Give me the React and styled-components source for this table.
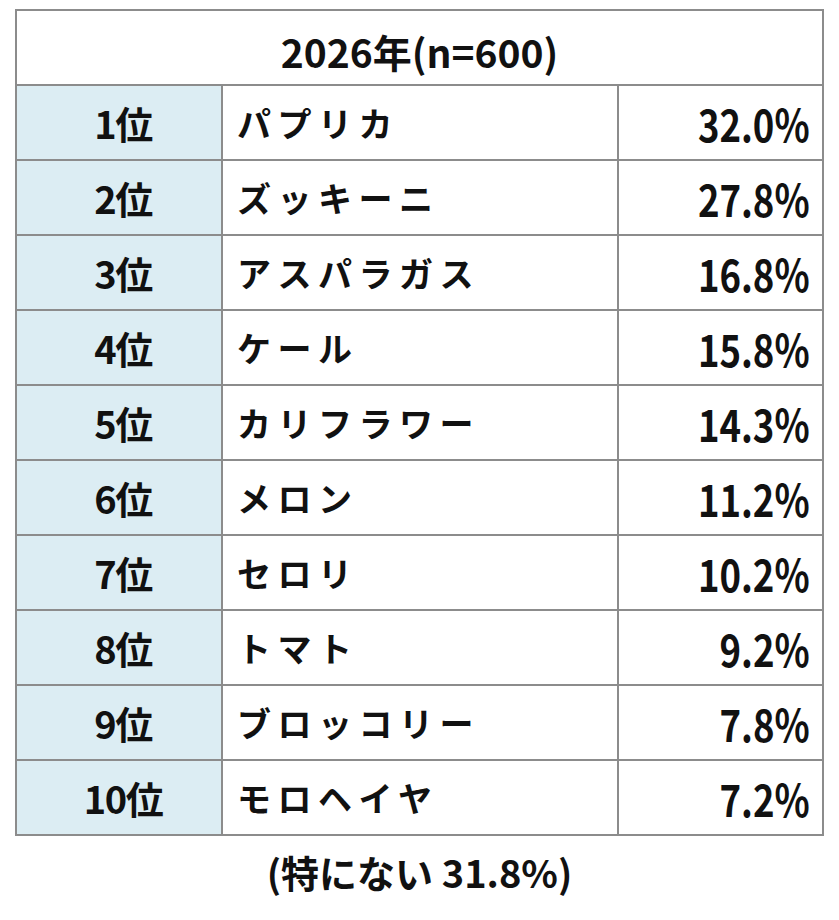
import React from "react";
import styled, { createGlobalStyle } from "styled-components";

const Global = createGlobalStyle`
  html, body { margin: 0; padding: 0; background: #ffffff; }
  body { font-family: "Noto Sans CJK JP", "Noto Sans", sans-serif; }
`;

const Page = styled.div`
  width: 839px;
  height: 920px;
  padding: 9px 15px 0 15px;
  box-sizing: border-box;
  background: #fff;
  display: flex;
  flex-direction: column;
  align-items: stretch;
`;

const Table = styled.div`
  display: grid;
  grid-template-columns: 206px 396px 1fr;
  grid-auto-rows: 75px;
  width: 809px;
  border-top: 2px solid #8c8c8c;
  border-left: 2px solid #8c8c8c;
  box-sizing: border-box;
`;

const Cell = styled.div`
  border-right: 2px solid #8c8c8c;
  border-bottom: 2px solid #8c8c8c;
  display: flex;
  align-items: center;
  font-weight: 700;
  color: #111;
  box-sizing: border-box;
  overflow: hidden;
  white-space: nowrap;
`;

const HeaderCell = styled(Cell)`
  grid-column: 1 / span 3;
  justify-content: center;
  padding-top: 6px;
  font-size: 39px;
  letter-spacing: 0px;
`;

const RankCell = styled(Cell)`
  background: #dcedf3;
  justify-content: center;
  font-size: 38px;
  letter-spacing: -1.5px;
  padding-left: 8px;
`;

const NameCell = styled(Cell)`
  padding-left: 14px;
  font-size: 34px;
  letter-spacing: 6.5px;
`;

const ValueCell = styled(Cell)`
  justify-content: flex-end;
  padding-right: 12px;
  font-size: 44px;
`;

const Condensed = styled.span`
  display: inline-block;
  transform: scaleX(0.83);
  transform-origin: right center;
`;

const Caption = styled.div`
  margin-top: 8px;
  text-align: center;
  font-size: 38px;
  font-weight: 700;
  color: #111;
  letter-spacing: 0px;
`;

const rows = [
  ["1位", "パプリカ", "32.0%"],
  ["2位", "ズッキーニ", "27.8%"],
  ["3位", "アスパラガス", "16.8%"],
  ["4位", "ケール", "15.8%"],
  ["5位", "カリフラワー", "14.3%"],
  ["6位", "メロン", "11.2%"],
  ["7位", "セロリ", "10.2%"],
  ["8位", "トマト", "9.2%"],
  ["9位", "ブロッコリー", "7.8%"],
  ["10位", "モロヘイヤ", "7.2%"],
];

export default function App() {
  return (
    <Page>
      <Global />
      <Table>
        <HeaderCell>2026年(n=600)</HeaderCell>
        {rows.map(([r, n, v]) => (
          <React.Fragment key={r}>
            <RankCell>{r}</RankCell>
            <NameCell>{n}</NameCell>
            <ValueCell>
              <Condensed>{v}</Condensed>
            </ValueCell>
          </React.Fragment>
        ))}
      </Table>
      <Caption>(特にない 31.8%)</Caption>
    </Page>
  );
}
